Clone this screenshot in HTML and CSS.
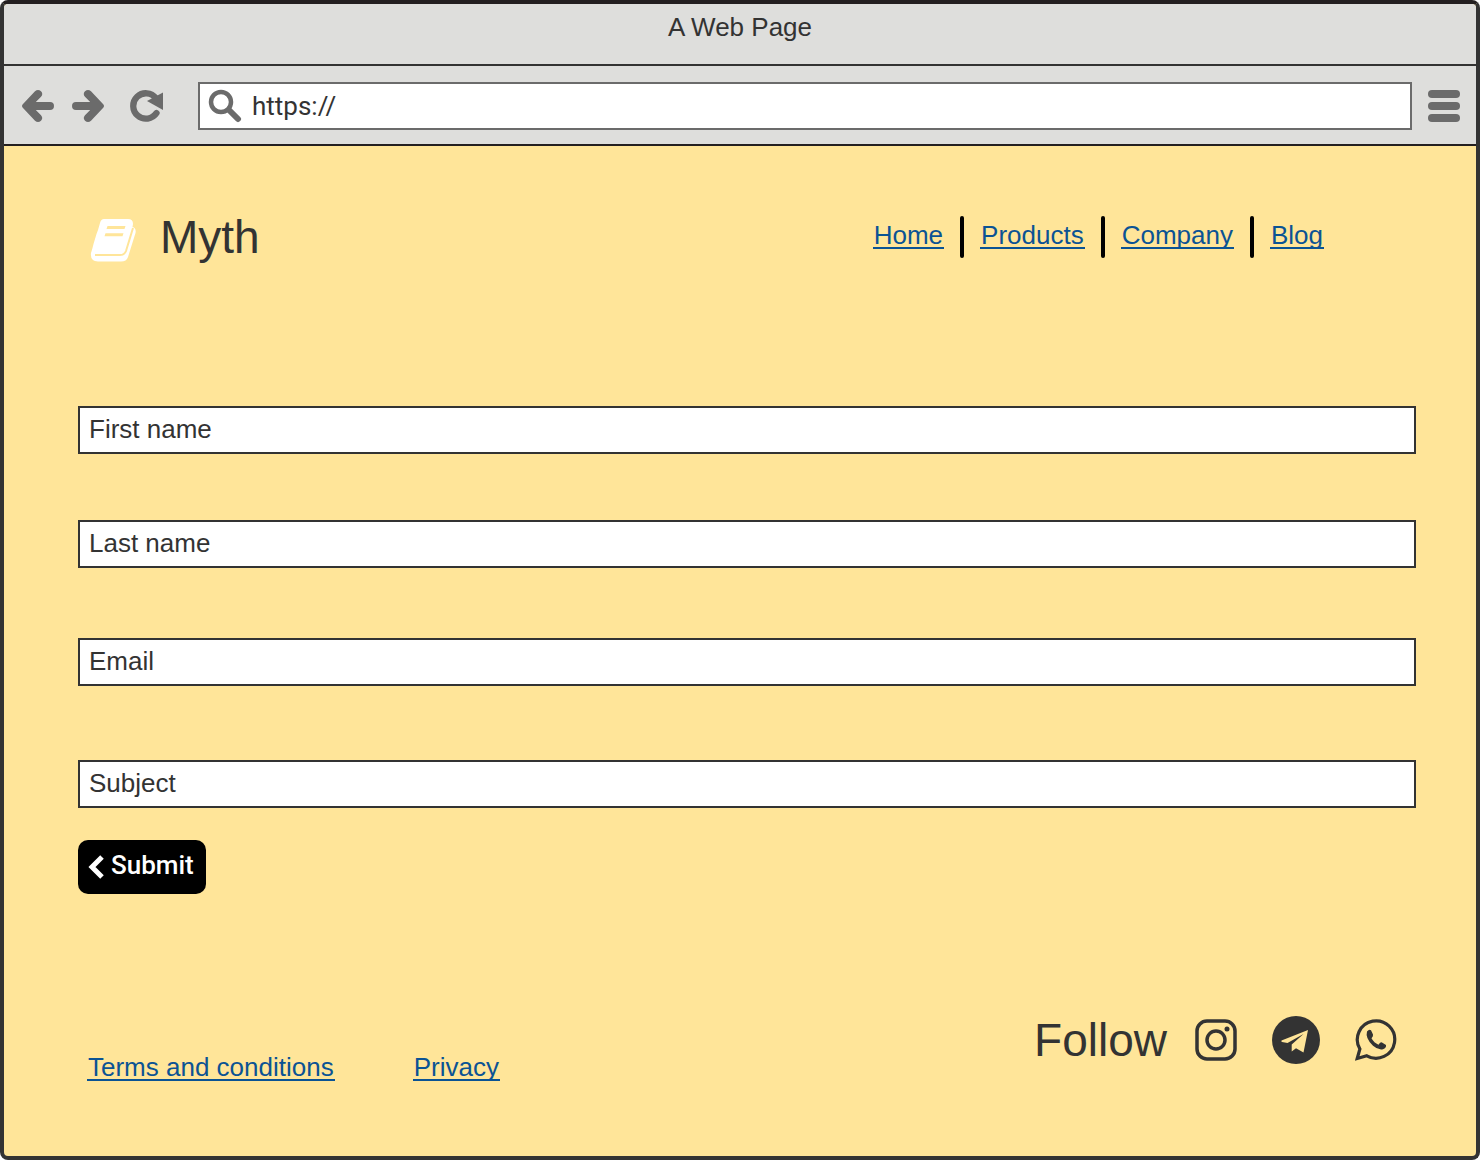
FILE: index.html
```html
<!DOCTYPE html>
<html lang="en">
<head>
<meta charset="utf-8">
<meta name="viewport" content="width=device-width, initial-scale=1">
<title>A Web Page</title>
<link rel="stylesheet" href="styles.css">
</head>
<body>
<div class="window">
  <div class="titlebar">A Web Page</div>
  <div class="toolbar">
    <button class="tool back" type="button" aria-label="Back">
      <svg width="32" height="32" viewBox="0 0 32 32"><path d="M13 1.300Q16-1.200 19 1.300 21.500 4 19 6.800L13.800 12H28a4 4 0 0 1 0 8H13.800L19 25.200Q21.500 28 19 30.700 16 33.200 13 30.700L1 18Q-1 16 1 14Z" fill="currentColor"/></svg>
    </button>
    <button class="tool forward" type="button" aria-label="Forward">
      <svg width="32" height="32" viewBox="0 0 32 32"><path d="M19 1.300Q16-1.200 13 1.300 10.500 4 13 6.800L18.200 12H4a4 4 0 0 0 0 8H18.200L13 25.200Q10.500 28 13 30.700 16 33.200 19 30.700L31 18Q33 16 31 14Z" fill="currentColor"/></svg>
    </button>
    <button class="tool reload" type="button" aria-label="Reload">
      <svg width="34" height="32" viewBox="0 0 34 32"><path d="M26.500 23A12.700 12.700 0 1 1 26 8.200" fill="none" stroke="currentColor" stroke-width="6.300" stroke-linecap="round"/><path d="M33 2.500V20L17 11z" fill="currentColor"/></svg>
    </button>
    <div class="address">
      <svg class="search" width="34" height="34" viewBox="0 0 34 34" fill="none" stroke="currentColor"><circle cx="13" cy="13" r="10" stroke-width="4.500"/><path d="M21 21l9 9" stroke-width="6" stroke-linecap="round"/></svg>
      <input class="url" type="text" aria-label="Address" value="https://">
    </div>
    <button class="menu" type="button" aria-label="Menu"><span class="bar"></span><span class="bar"></span><span class="bar"></span></button>
  </div>

  <div class="page">
    <header class="header">
      <svg class="book" width="46" height="43" viewBox="0 0 46 43"><path d="M14 0H38Q43 0 43 5L42.500 8Q46.500 9 45.500 14L38 38Q36.500 42.500 31 42.500H8Q0 42 1 34L2.500 29 3.500 25 5 20 6.500 15 8 11 10 4Q11 0 14 0Z" fill="#fff"/><path d="M43 9 36 32Q34.500 36 30 36H5" fill="none" stroke="#ffe599" stroke-width="2"/><path d="M17.500 7H35.500L34.500 10H16.500ZM15.500 14.200H33.500L32.500 17.200H14.500Z" fill="#ffe599"/></svg>
      <h1 class="brand">Myth</h1>
      <nav class="nav">
        <a class="link" href="#">Home</a><span class="divider"></span>
        <a class="link" href="#">Products</a><span class="divider"></span>
        <a class="link" href="#">Company</a><span class="divider"></span>
        <a class="link" href="#">Blog</a>
      </nav>
    </header>

    <form class="form">
      <input class="field" type="text" aria-label="First name" placeholder="First name">
      <input class="field" type="text" aria-label="Last name" placeholder="Last name">
      <input class="field" type="email" aria-label="Email" placeholder="Email">
      <input class="field" type="text" aria-label="Subject" placeholder="Subject">
      <button class="submit" type="button">
        <svg class="chevron" width="16" height="24" viewBox="0 0 16 24"><path d="M14 2 4 12l10 10" fill="none" stroke="currentColor" stroke-width="5"/></svg>
        Submit
      </button>
    </form>

    <footer class="footer">
      <div class="legal">
        <a class="link" href="#">Terms and conditions</a>
        <a class="link" href="#">Privacy</a>
      </div>
      <div class="follow">
        <h2 class="follow-title">Follow</h2>
        <a class="social" href="#" aria-label="Instagram">
          <svg width="42" height="42" viewBox="0 0 42 42" fill="none" stroke="currentColor"><rect x="2" y="2" width="38" height="38" rx="10" stroke-width="3.500"/><circle cx="21" cy="21" r="9" stroke-width="3.500"/><circle cx="32" cy="10" r="2.500" fill="currentColor" stroke="none"/></svg>
        </a>
        <a class="social" href="#" aria-label="Telegram">
          <svg width="48" height="48" viewBox="0 0 48 48"><circle cx="24" cy="24" r="24" fill="currentColor"/><path d="M36 14 9.500 24.500Q9 25.500 10 26L15.500 27 31.500 18 19.700 28.500V35.500L24 32.200 31.500 36.500Z" fill="#ffe599"/></svg>
        </a>
        <a class="social" href="#" aria-label="WhatsApp">
          <svg width="42" height="42" viewBox="0 0 42 42"><path d="M2.200 39.500 4.900 30A18.700 18.700 0 1 1 11.800 36.800Z" fill="none" stroke="currentColor" stroke-width="3.200"/><path d="M12 12.500Q14 10 16 11.200L18 15.500Q18.500 17 16.500 19.300 19 24 23.500 25.700 25.500 22.800 27 23.500L31 26Q31.500 29 28 30.200 23 31.300 18 26.800 10 19 12 12.500Z" fill="currentColor"/></svg>
        </a>
      </div>
    </footer>
  </div>
</div>
</body>
</html>
```
FILE: styles.css
```css
* { box-sizing: border-box; }

body {
  margin: 0;
  color: #333;
  font: 26px/32px "Liberation Sans", Arial, sans-serif;
}

button { margin: 0; padding: 0; border: 0; background: none; font: inherit; }
input { margin: 0; font: inherit; color: inherit; }
svg { display: block; flex: none; }

.window {
  display: flex;
  flex-direction: column;
  min-height: 100vh;
  border: 4px solid #333;
  border-top-color: #231f20;
  border-radius: 8px;
  background: #ffe599;
  overflow: hidden;
}

.titlebar {
  height: 62px;
  padding-top: 7px;
  border-bottom: 2px solid #333;
  background: #dededc;
  text-align: center;
}

.toolbar {
  display: flex;
  align-items: center;
  height: 80px;
  padding: 2px 16px 0 18px;
  border-bottom: 2px solid #231f20;
  background: #dededc;
  color: #6b6b6b;
}

.tool { color: inherit; }
.forward { margin-left: 18px; }
.reload { margin-left: 26px; }

.address {
  display: flex;
  flex: 1;
  align-items: center;
  height: 48px;
  margin: 0 16px 0 34px;
  padding-left: 8px;
  border: 2px solid #6b6b6b;
  background: #fff;
}

.url {
  flex: 1;
  min-width: 0;
  padding: 0 10px;
  border: 0;
  background: none;
  color: #333;
  font-family: Roboto, sans-serif;
}

.menu {
  display: flex;
  flex-direction: column;
  gap: 4px;
}
.bar { width: 32px; height: 8px; border-radius: 4px; background: #6b6b6b; }

.page {
  display: flex;
  flex: 1;
  flex-direction: column;
  padding: 64px 60px 66px 74px;
}

.header {
  display: flex;
  align-items: center;
  padding: 0 92px 0 12px;
}
.book { margin-top: 6px; }
.brand,
.follow-title {
  margin: 0;
  font-size: 46px;
  line-height: 54px;
  font-weight: 400;
}
.brand { margin-left: 24px; }

.nav {
  display: flex;
  align-items: center;
  gap: 16px;
  margin-left: auto;
}
.link {
  margin-bottom: 2px;
  padding: 0 1px;
  border-bottom: 2px solid #0b5394;
  color: #0b5394;
  line-height: 24px;
  text-decoration: none;
}
.divider { width: 4px; height: 42px; border-radius: 2px; background: #000; }

.form {
  display: grid;
  grid-template-rows: 114px 118px 122px 80px auto;
  align-items: start;
  margin-top: 142px;
}
.field {
  width: 100%;
  height: 48px;
  padding: 0 9px 2px;
  border: 2px solid #333;
  border-radius: 0;
  background: #fff;
}
.field::placeholder { color: #333; opacity: 1; }

.submit {
  display: flex;
  align-items: center;
  justify-self: start;
  gap: 7px;
  height: 54px;
  padding: 0 12px 4px 10px;
  border-radius: 10px;
  background: #000;
  color: #fff;
  font-family: Roboto, sans-serif;
  font-weight: 500;
}
.chevron { margin-top: 4px; }

.footer {
  display: flex;
  align-items: flex-end;
  justify-content: space-between;
  margin-top: auto;
  padding: 0 19px 0 9px;
}
.legal { display: flex; gap: 78px; padding-bottom: 7px; }
.follow { display: flex; align-items: center; padding-bottom: 23px; }
.social { margin-left: 35px; color: #333; }
.follow-title + .social { margin-left: 28px; }
```
